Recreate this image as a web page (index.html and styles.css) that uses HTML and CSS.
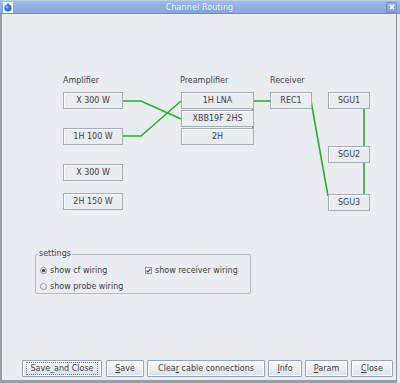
FILE: index.html
```html
<!DOCTYPE html>
<html>
  <head>
    <title>Channel Routing</title>
    <link rel="stylesheet" href="styles.css">
  </head>
  <body>
    <div class="window">
      <div class="titlebar">
        <svg class="app-icon" width="10" height="11" viewBox="0 0 10 11">
          <rect x="0" y="0" width="10" height="11" fill="#f4f7fb" />
          <circle cx="5" cy="6" r="3.6" fill="#2f6fd8" />
          <circle cx="4" cy="5" r="1.6" fill="#7fb2f2" />
          <path d="M5 0.8 L6.4 3.2 L3.6 3.2 Z" fill="#2f6fd8" />
        </svg>
        <span class="title">Channel Routing</span>
        <span class="close-btn">
          <svg width="6" height="6" viewBox="0 0 6 6">
            <path d="M0.8 0.8 L5.2 5.2 M5.2 0.8 L0.8 5.2" stroke="#fff" stroke-width="1.4" />
          </svg>
        </span>
      </div>

      <div class="content">
        <div class="diagram">
          <!-- wires, drawn in window coordinates -->
          <svg class="wires" width="394" height="235" viewBox="2 15 394 235">
            <polyline points="122,102 141,102 181,120" />
            <polyline points="122,137 141,137 181,102" />
            <line x1="253" y1="102" x2="270" y2="102" />
            <line x1="253" y1="102" x2="253" y2="138" />
            <line x1="311" y1="102" x2="328" y2="197" />
            <line x1="364" y1="110" x2="364" y2="195" />
          </svg>

          <div class="col-label" style="left: 61px">Amplifier</div>
          <div class="col-label" style="left: 178px">Preamplifier</div>
          <div class="col-label" style="left: 268px">Receiver</div>

          <div class="node amp" style="top: 78px">X 300 W</div>
          <div class="node amp" style="top: 114px">1H 100 W</div>
          <div class="node amp" style="top: 150px">X 300 W</div>
          <div class="node amp" style="top: 179px">2H 150 W</div>

          <div class="node pre" style="top: 78px">1H LNA</div>
          <div class="node pre" style="top: 96px">XBB19F 2HS</div>
          <div class="node pre" style="top: 114px">2H</div>

          <div class="node rec" style="top: 78px">REC1</div>

          <div class="node sgu" style="top: 78px">SGU1</div>
          <div class="node sgu" style="top: 132px">SGU2</div>
          <div class="node sgu" style="top: 180px">SGU3</div>
        </div>

        <fieldset class="settings">
          <legend>settings</legend>
          <div class="settings-grid">
            <div class="option"><span class="radio checked"></span>show cf wiring</div>
            <div class="option">
              <span class="checkbox">
                <svg width="5" height="5" viewBox="0 0 5 5">
                  <path d="M0.6 2.6 L1.9 4 L4.4 0.8" fill="none" stroke="#333" stroke-width="1.1" />
                </svg>
              </span>show receiver wiring
            </div>
            <div class="option"><span class="radio"></span>show probe wiring</div>
          </div>
        </fieldset>

        <div class="button-row">
          <button class="btn btn-save-close"><span class="focus">Save_and Close</span></button>
          <button class="btn btn-save"><u>S</u>ave</button>
          <button class="btn btn-clear">Clea<u>r</u> cable connections</button>
          <button class="btn btn-info"><u>I</u>nfo</button>
          <button class="btn btn-param"><u>P</u>aram</button>
          <button class="btn btn-close"><u>C</u>lose</button>
        </div>
      </div>
    </div>
  </body>
</html>
```

FILE: styles.css
```css
/* page */
body {
  margin: 0;
  background-color: #c9ccd0;
  font-family: "DejaVu Sans", sans-serif;
  font-size: 8px;
  color: #3d3d3d;
}

.window {
  width: 400px;
  height: 383px;
  box-sizing: border-box;
  display: flex;
  flex-direction: column;
  background-color: #e9edf2;
}

/* title bar */
.titlebar {
  height: 14px;
  flex: none;
  display: flex;
  align-items: center;
  padding: 0 3px;
  border-top: 1px solid #b9cdea;
  border-bottom: 1px solid #6f8fc2;
  box-sizing: border-box;
  background: linear-gradient(#9fbbe4, #83a5d8);
}
.app-icon {
  flex: none;
}
.title {
  flex: 1;
  text-align: center;
  color: #fff;
  text-shadow: 0 0 1px #5c7cae;
  letter-spacing: 0.1px;
}
.close-btn {
  width: 9px;
  height: 9px;
  flex: none;
  display: flex;
  align-items: center;
  justify-content: center;
  border: 1px solid #6d8cbc;
  border-radius: 2px;
  background: linear-gradient(#9db8de, #7f9fd0);
}

/* main area */
.content {
  flex: 1;
  display: flex;
  flex-direction: column;
  border-left: 2px solid #9a9ea4;
  border-right: 1px solid #8f949a;
  border-bottom: 3px solid #9a9ea4;
  margin-right: 3px;
  padding-bottom: 3px;
  background-color: #e9edf2;
}

/* routing diagram */
.diagram {
  position: relative;
  height: 235px;
  flex: none;
}
.wires {
  position: absolute;
  left: 0;
  top: 0;
}
.wires polyline,
.wires line {
  fill: none;
  stroke: #26b126;
  stroke-width: 1.6;
}
.col-label {
  position: absolute;
  top: 62px;
  line-height: 10px;
  color: #444;
}
.node {
  position: absolute;
  height: 17px;
  box-sizing: border-box;
  border: 1px solid #a3adb8;
  box-shadow: inset 1px 1px 0 #f8fafc;
  background-color: #e9edf2;
  text-align: center;
  line-height: 16px;
  color: #3d3d3d;
}
.amp {
  left: 61px;
  width: 60px;
}
.pre {
  left: 179px;
  width: 73px;
}
.rec {
  left: 268px;
  width: 42px;
}
.sgu {
  left: 326px;
  width: 42px;
}

/* settings box */
.settings {
  margin: 0 0 0 33px;
  width: 216px;
  height: 45px;
  box-sizing: border-box;
  padding: 3px 4px 0 4px;
  border: 1px solid #b4bcc5;
  border-radius: 2px;
}
.settings legend {
  padding: 0 1px;
  margin-left: -2px;
  line-height: 10px;
  color: #444;
}
.settings-grid {
  display: grid;
  grid-template-columns: 105px 1fr;
  grid-auto-rows: 16px;
  align-items: center;
}
.option {
  display: flex;
  align-items: center;
  gap: 3px;
}
.radio {
  width: 7px;
  height: 7px;
  box-sizing: border-box;
  border: 1px solid #8c97a4;
  border-radius: 50%;
  background: linear-gradient(#ffffff, #dfe5ec);
  display: flex;
  align-items: center;
  justify-content: center;
}
.radio.checked::after {
  content: "";
  width: 3px;
  height: 3px;
  border-radius: 50%;
  background-color: #333;
}
.checkbox {
  width: 7px;
  height: 7px;
  box-sizing: border-box;
  border: 1px solid #8c97a4;
  background: linear-gradient(#ffffff, #dfe5ec);
  display: flex;
  align-items: center;
  justify-content: center;
}

/* buttons */
.button-row {
  margin-top: auto;
  display: flex;
  justify-content: flex-end;
  gap: 3px;
  padding-right: 3px;
}
.btn {
  height: 17px;
  padding: 0;
  font-family: "DejaVu Sans", sans-serif;
  font-size: 8px;
  color: #3d3d3d;
  border: 1px solid #97a4b3;
  border-radius: 1px;
  box-shadow: inset 0 0 0 1px #fbfcfd;
  background: linear-gradient(#fbfcfd, #d9e1ea);
}
.btn u {
  text-decoration-thickness: 1px;
}
.btn .focus {
  padding: 1px 3px;
  border: 1px dotted #6c7886;
}
.btn-save-close { width: 80px; margin-right: 1px; }
.btn-save { width: 38px; }
.btn-clear { width: 118px; }
.btn-info { width: 34px; }
.btn-param { width: 43px; }
.btn-close { width: 42px; }
```
